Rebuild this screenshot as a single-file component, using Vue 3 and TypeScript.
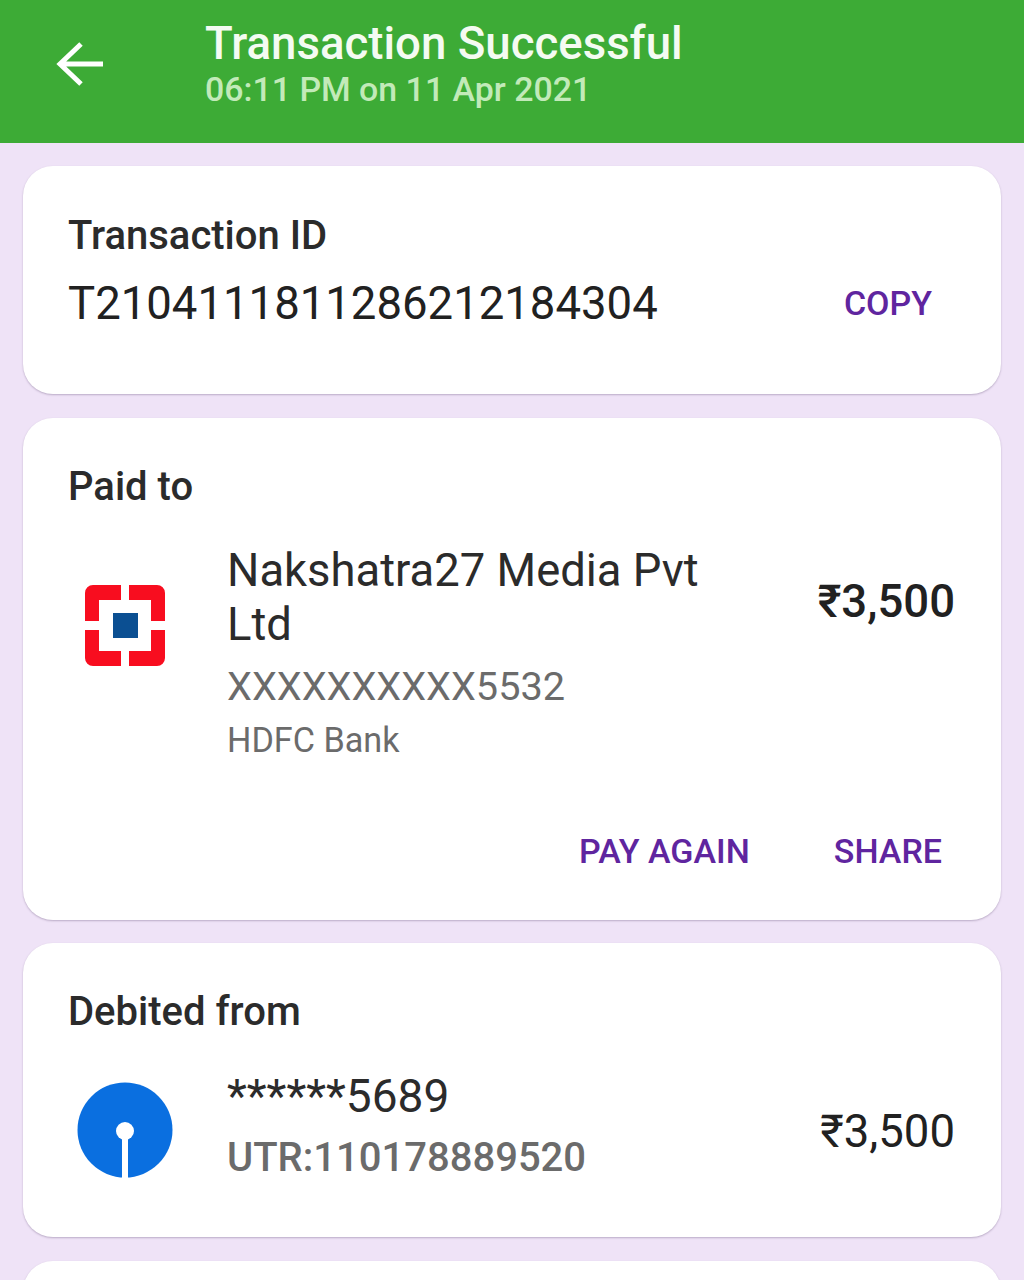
<script setup lang="ts">
const title = 'Transaction Successful'
</script>

<template>
  <div class="page">
    <header class="header">
      <svg class="back" width="48" height="46" viewBox="0 0 48 46" fill="none" stroke="#fff" stroke-width="5">
        <path d="M47 23H5M25 3 4 23l21 20" />
      </svg>
      <div class="head-text">
        <div class="title">{{ title }}</div>
        <div class="sub">06:11 PM on 11 Apr 2021</div>
      </div>
    </header>

    <main class="list">
      <section class="card card-id">
        <div class="label">Transaction ID</div>
        <div class="id-row">
          <span class="id">T2104111811286212184304</span>
          <span class="action">COPY</span>
        </div>
      </section>

      <section class="card card-paid">
        <div class="label">Paid to</div>
        <div class="party">
          <div class="logo">
            <svg width="80" height="81" viewBox="0 0 80 81">
              <g fill="#f80d1f">
                <path d="M8 0h28v15H14v21H0V8a8 8 0 0 1 8-8z" />
                <path d="M72 0H44v15h22v21h14V8a8 8 0 0 0-8-8z" />
                <path d="M0 45h14v21h22v15H8a8 8 0 0 1-8-8z" />
                <path d="M80 45H66v21H44v15h28a8 8 0 0 0 8-8z" />
              </g>
              <rect x="28" y="28" width="25" height="25" fill="#0b4f92" />
            </svg>
          </div>
          <div class="details">
            <div class="name">Nakshatra27 Media Pvt Ltd</div>
            <div class="acct">XXXXXXXXXX5532</div>
            <div class="bank">HDFC Bank</div>
          </div>
          <div class="amount strong">₹3,500</div>
        </div>
        <div class="actions">
          <span class="action">PAY AGAIN</span>
          <span class="action">SHARE</span>
        </div>
      </section>

      <section class="card card-debit">
        <div class="label">Debited from</div>
        <div class="party debit">
          <div class="logo">
            <svg width="96" height="96" viewBox="0 0 96 96">
              <circle cx="48" cy="48" r="47.5" fill="#0a6fe0" />
              <circle cx="48" cy="49" r="9" fill="#fff" />
              <rect x="45" y="50" width="6" height="46" fill="#fff" />
            </svg>
          </div>
          <div class="details">
            <div class="name">******5689</div>
            <div class="utr">UTR:110178889520</div>
          </div>
          <div class="amount">₹3,500</div>
        </div>
      </section>

      <section class="card card-next"></section>
    </main>
  </div>
</template>

<style>
html, body { margin: 0; background: #efe3f7; }
</style>

<style scoped>
.page {
  width: 1024px;
  height: 1280px;
  overflow: hidden;
  background: #efe3f7;
  font-family: Roboto, "Noto Sans", sans-serif;
  color: #212121;
}
.header {
  height: 143px;
  background: #3dab36;
  display: flex;
  align-items: flex-start;
  box-sizing: border-box;
  padding: 41px 0 0 56px;
}
.back { flex: none; }
.head-text { margin: -22px 0 0 101px; }
.title {
  font-size: 45.6px;
  line-height: 50px;
  font-weight: 500;
  color: #f4fbf2;
}
.sub {
  font-size: 33.9px;
  line-height: 40px;
  margin-top: 1px;
  font-weight: 500;
  color: #c2eab9;
}
.list {
  display: flex;
  flex-direction: column;
  gap: 23.5px;
  padding: 23px 23px 0;
}
.card {
  background: #fff;
  border-radius: 30px;
  box-shadow: 0 1px 2px rgba(90, 70, 110, 0.35);
  box-sizing: border-box;
  padding: 48px 46px 0 45px;
}
.card-id { height: 228px; }
.card-paid { height: 502px; padding-top: 47px; }
.card-debit { height: 294px; padding-top: 47px; }
.card-next { height: 60px; }
.label {
  font-size: 40px;
  line-height: 44px;
  font-weight: 500;
  color: #2b2b2b;
}
.id-row {
  display: flex;
  justify-content: space-between;
  align-items: center;
  margin-top: 19px;
  padding-right: 23px;
}
.id-row .action { margin-bottom: 2px; }
.id {
  font-size: 45.5px;
  line-height: 54px;
  color: #212121;
}
.action {
  font-size: 34px;
  font-weight: 500;
  color: #5f259f;
}
.party {
  display: flex;
  align-items: flex-start;
  margin-top: 35px;
}
.logo {
  width: 159px;
  flex: none;
  display: flex;
  justify-content: flex-start;
  padding: 41px 0 0 17px;
  box-sizing: border-box;
}
.details { flex: 1; width: 0; }
.name {
  font-size: 45.4px;
  line-height: 54px;
  color: #2b2b2b;
  max-width: 500px;
}
.acct {
  font-size: 39.7px;
  line-height: 46px;
  margin-top: 12px;
  color: #6b6b6b;
}
.bank {
  font-size: 34.2px;
  line-height: 40px;
  margin-top: 10px;
  color: #6b6b6b;
}
.amount {
  font-size: 45.5px;
  line-height: 54px;
  color: #212121;
  margin-top: 31px;
}
.amount.strong { font-weight: 500; }
.actions {
  display: flex;
  justify-content: flex-end;
  gap: 84px;
  margin-top: 71px;
  padding-right: 13px;
}
.debit { margin-top: 35px; }
.debit .name { font-size: 46px; }
.debit .logo { padding: 13px 0 0 9px; }
.debit .amount { margin-top: 36px; }
.utr {
  font-size: 40px;
  line-height: 46px;
  margin-top: 12px;
  font-weight: 500;
  color: #6b6b6b;
}
</style>
